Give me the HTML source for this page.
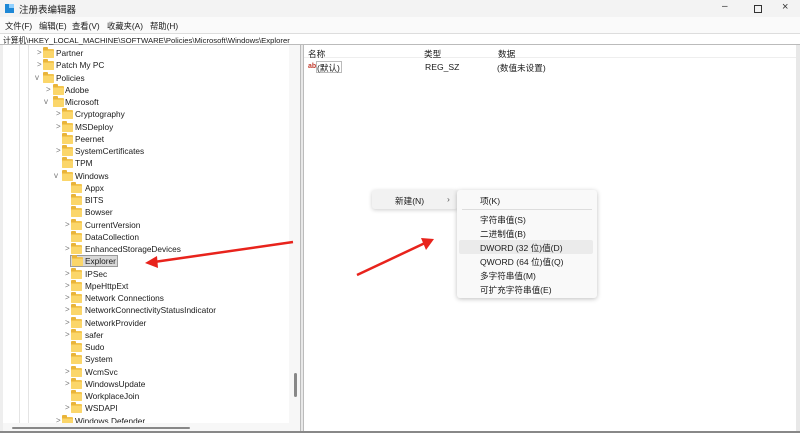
<!DOCTYPE html>
<html><head><meta charset="utf-8">
<style>
*{margin:0;padding:0;box-sizing:border-box}
body{width:800px;height:433px;overflow:hidden;background:#fff;font-family:"Liberation Sans","Noto Sans CJK SC",sans-serif;font-size:9px;color:#1a1a1a;position:relative}
.a{position:absolute;white-space:nowrap}
.row{position:absolute;height:12px;line-height:12px}
.fd{position:absolute;width:11px;height:9px;background:#f3c44e;border-radius:1px;top:2px}
.fd:before{content:"";position:absolute;left:0;top:-2px;width:5px;height:3px;background:#e9b43a;border-radius:1px 1px 0 0}
.fd:after{content:"";position:absolute;left:0;top:2px;width:11px;height:7px;background:#fbd66a;border-radius:1px}
.ch{position:absolute;font-size:8px;color:#777;top:0}
.tx{position:absolute;top:0;font-size:8.3px}
.m{position:absolute;font-size:8.6px}
.mn{position:absolute;top:20px;font-size:8.3px}
</style></head><body>
<!-- title bar -->
<div class="a" style="left:0;top:0;width:800px;height:17px;background:#f3f3f3"></div>
<div class="a" style="left:5px;top:4px;width:9px;height:9px;background:#1e88d6"></div>
<div class="a" style="left:9px;top:4px;width:5px;height:4px;background:#8fd0ff"></div>
<div class="a" style="left:19px;top:2px;font-size:9.5px">注册表编辑器</div>
<div class="a" style="left:722px;top:1px;font-size:10px;color:#333">–</div>
<div class="a" style="left:754px;top:5px;width:8px;height:8px;border:1px solid #333"></div>
<div class="a" style="left:782px;top:1px;font-size:11px;color:#333">×</div>
<!-- menu -->
<div class="a" style="left:0;top:17px;width:800px;height:16px;background:#fafafa"></div>
<div class="mn" style="left:5px">文件(F)</div>
<div class="mn" style="left:39px">编辑(E)</div>
<div class="mn" style="left:72px">查看(V)</div>
<div class="mn" style="left:107px">收藏夹(A)</div>
<div class="mn" style="left:150px">帮助(H)</div>
<!-- address -->
<div class="a" style="left:0;top:33px;width:800px;height:12px;background:#fff;border-top:1px solid #ddd;border-bottom:1px solid #bbb"></div>
<div class="a" style="left:3px;top:34.5px;font-size:7.7px">计算机\HKEY_LOCAL_MACHINE\SOFTWARE\Policies\Microsoft\Windows\Explorer</div>
<!-- panes -->
<div class="a" style="left:0;top:45px;width:3px;height:388px;background:#eee"></div>
<div class="a" style="left:19px;top:45px;width:1px;height:378px;background:#e4e4e4"></div>
<div class="a" style="left:28px;top:45px;width:1px;height:378px;background:#e4e4e4"></div>
<div class="a" style="left:289px;top:45px;width:11px;height:378px;background:#f7f7f7"></div>
<div class="a" style="left:294px;top:373px;width:3px;height:24px;background:#888;border-radius:2px"></div>
<div class="a" style="left:3px;top:423px;width:297px;height:10px;background:#f7f7f7"></div>
<div class="a" style="left:12px;top:427px;width:178px;height:2px;background:#888;border-radius:1px"></div>
<div class="a" style="left:300px;top:45px;width:4px;height:388px;background:#e8e8e8;border-left:1px solid #bbb;border-right:1px solid #bbb"></div>
<div class="a" style="left:796px;top:45px;width:4px;height:388px;background:#e8e8e8"></div>
<div class="a" style="left:0;top:431px;width:800px;height:2px;background:#888"></div>
<!-- tree -->
<div class="row" style="top:47px;left:0;width:290px"><span class="ch" style="left:37px">&gt;</span><span class="fd" style="left:43px"></span><span class="tx" style="left:56px">Partner</span></div>
<div class="row" style="top:59.25px;left:0;width:290px"><span class="ch" style="left:37px">&gt;</span><span class="fd" style="left:43px"></span><span class="tx" style="left:56px">Patch My PC</span></div>
<div class="row" style="top:71.5px;left:0;width:290px"><span class="ch" style="left:35px">v</span><span class="fd" style="left:43px"></span><span class="tx" style="left:56px">Policies</span></div>
<div class="row" style="top:83.75px;left:0;width:290px"><span class="ch" style="left:46px">&gt;</span><span class="fd" style="left:53px"></span><span class="tx" style="left:65px">Adobe</span></div>
<div class="row" style="top:96px;left:0;width:290px"><span class="ch" style="left:44px">v</span><span class="fd" style="left:53px"></span><span class="tx" style="left:65px">Microsoft</span></div>
<div class="row" style="top:108.25px;left:0;width:290px"><span class="ch" style="left:56px">&gt;</span><span class="fd" style="left:62px"></span><span class="tx" style="left:75px">Cryptography</span></div>
<div class="row" style="top:120.5px;left:0;width:290px"><span class="ch" style="left:56px">&gt;</span><span class="fd" style="left:62px"></span><span class="tx" style="left:75px">MSDeploy</span></div>
<div class="row" style="top:132.75px;left:0;width:290px"><span class="fd" style="left:62px"></span><span class="tx" style="left:75px">Peernet</span></div>
<div class="row" style="top:145px;left:0;width:290px"><span class="ch" style="left:56px">&gt;</span><span class="fd" style="left:62px"></span><span class="tx" style="left:75px">SystemCertificates</span></div>
<div class="row" style="top:157.25px;left:0;width:290px"><span class="fd" style="left:62px"></span><span class="tx" style="left:75px">TPM</span></div>
<div class="row" style="top:169.5px;left:0;width:290px"><span class="ch" style="left:54px">v</span><span class="fd" style="left:62px"></span><span class="tx" style="left:75px">Windows</span></div>
<div class="row" style="top:181.75px;left:0;width:290px"><span class="fd" style="left:71px"></span><span class="tx" style="left:85px">Appx</span></div>
<div class="row" style="top:194px;left:0;width:290px"><span class="fd" style="left:71px"></span><span class="tx" style="left:85px">BITS</span></div>
<div class="row" style="top:206.25px;left:0;width:290px"><span class="fd" style="left:71px"></span><span class="tx" style="left:85px">Bowser</span></div>
<div class="row" style="top:218.5px;left:0;width:290px"><span class="ch" style="left:65px">&gt;</span><span class="fd" style="left:71px"></span><span class="tx" style="left:85px">CurrentVersion</span></div>
<div class="row" style="top:230.75px;left:0;width:290px"><span class="fd" style="left:71px"></span><span class="tx" style="left:85px">DataCollection</span></div>
<div class="row" style="top:243px;left:0;width:290px"><span class="ch" style="left:65px">&gt;</span><span class="fd" style="left:71px"></span><span class="tx" style="left:85px">EnhancedStorageDevices</span></div>
<div class="a" style="left:70px;top:255px;width:48px;height:12px;background:#d9d9d9;border:1px solid #9a9a9a"></div>
<div class="row" style="top:255.25px;left:0;width:290px"><span class="fd" style="left:72px"></span><span class="tx" style="left:85px">Explorer</span></div>
<div class="row" style="top:267.5px;left:0;width:290px"><span class="ch" style="left:65px">&gt;</span><span class="fd" style="left:71px"></span><span class="tx" style="left:85px">IPSec</span></div>
<div class="row" style="top:279.75px;left:0;width:290px"><span class="ch" style="left:65px">&gt;</span><span class="fd" style="left:71px"></span><span class="tx" style="left:85px">MpeHttpExt</span></div>
<div class="row" style="top:292px;left:0;width:290px"><span class="ch" style="left:65px">&gt;</span><span class="fd" style="left:71px"></span><span class="tx" style="left:85px">Network Connections</span></div>
<div class="row" style="top:304.25px;left:0;width:290px"><span class="ch" style="left:65px">&gt;</span><span class="fd" style="left:71px"></span><span class="tx" style="left:85px">NetworkConnectivityStatusIndicator</span></div>
<div class="row" style="top:316.5px;left:0;width:290px"><span class="ch" style="left:65px">&gt;</span><span class="fd" style="left:71px"></span><span class="tx" style="left:85px">NetworkProvider</span></div>
<div class="row" style="top:328.75px;left:0;width:290px"><span class="ch" style="left:65px">&gt;</span><span class="fd" style="left:71px"></span><span class="tx" style="left:85px">safer</span></div>
<div class="row" style="top:341px;left:0;width:290px"><span class="fd" style="left:71px"></span><span class="tx" style="left:85px">Sudo</span></div>
<div class="row" style="top:353.25px;left:0;width:290px"><span class="fd" style="left:71px"></span><span class="tx" style="left:85px">System</span></div>
<div class="row" style="top:365.5px;left:0;width:290px"><span class="ch" style="left:65px">&gt;</span><span class="fd" style="left:71px"></span><span class="tx" style="left:85px">WcmSvc</span></div>
<div class="row" style="top:377.75px;left:0;width:290px"><span class="ch" style="left:65px">&gt;</span><span class="fd" style="left:71px"></span><span class="tx" style="left:85px">WindowsUpdate</span></div>
<div class="row" style="top:390px;left:0;width:290px"><span class="fd" style="left:71px"></span><span class="tx" style="left:85px">WorkplaceJoin</span></div>
<div class="row" style="top:402.25px;left:0;width:290px"><span class="ch" style="left:65px">&gt;</span><span class="fd" style="left:71px"></span><span class="tx" style="left:85px">WSDAPI</span></div>
<div class="a" style="left:0;top:414.5px;width:289px;height:8.5px;overflow:hidden"><div class="row" style="top:0;left:0;width:290px"><span class="ch" style="left:56px">&gt;</span><span class="fd" style="left:62px"></span><span class="tx" style="left:75px">Windows Defender</span></div></div>
<!-- right pane -->
<div class="a" style="left:304px;top:46px;width:492px;height:12px;border-bottom:1px solid #eee"></div>
<div class="a" style="left:308px;top:48px;font-size:8.6px">名称</div>
<div class="a" style="left:424px;top:48px;font-size:8.6px">类型</div>
<div class="a" style="left:498px;top:48px;font-size:8.6px">数据</div>
<div class="a" style="left:308px;top:63px;font-size:7px;color:#c0392b;font-weight:bold">ab</div>
<div class="a" style="left:316px;top:61px;width:26px;height:12px;border:1px solid #bbb"></div>
<div class="a" style="left:317px;top:62px;font-size:8.6px">(默认)</div>
<div class="a" style="left:425px;top:62px;font-size:8.6px">REG_SZ</div>
<div class="a" style="left:497px;top:62px;font-size:8.6px">(数值未设置)</div>
<!-- context menu -->
<div class="a" style="left:372px;top:190px;width:86px;height:19px;background:#f2f2f2;border-radius:3px;box-shadow:0 1px 4px rgba(0,0,0,.2)"></div>
<div class="m" style="left:395px;top:195px">新建(N)</div>
<div class="m" style="left:447px;top:194px;color:#555">›</div>
<div class="a" style="left:457px;top:190px;width:140px;height:108px;background:#f9f9f9;border-radius:3px;box-shadow:0 1px 5px rgba(0,0,0,.25)"></div>
<div class="m" style="left:480px;top:195px">项(K)</div>
<div class="a" style="left:462px;top:209px;width:130px;height:1px;background:#ddd"></div>
<div class="m" style="left:480px;top:214px">字符串值(S)</div>
<div class="m" style="left:480px;top:228px">二进制值(B)</div>
<div class="a" style="left:459px;top:240px;width:134px;height:14px;background:#ebebeb;border-radius:2px"></div>
<div class="m" style="left:480px;top:242px">DWORD (32 位)值(D)</div>
<div class="m" style="left:480px;top:256px">QWORD (64 位)值(Q)</div>
<div class="m" style="left:480px;top:270px">多字符串值(M)</div>
<div class="m" style="left:480px;top:284px">可扩充字符串值(E)</div>
<!-- arrows -->
<svg class="a" style="left:0;top:0" width="800" height="433">
<line x1="293" y1="242" x2="154" y2="262" stroke="#e8231c" stroke-width="2.5"/>
<polygon points="145,263 157,256 158,268" fill="#e8231c"/>
<line x1="357" y1="275" x2="425" y2="243" stroke="#e8231c" stroke-width="2.5"/>
<polygon points="434,239 421,238 426,250" fill="#e8231c"/>
</svg>
</body></html>
